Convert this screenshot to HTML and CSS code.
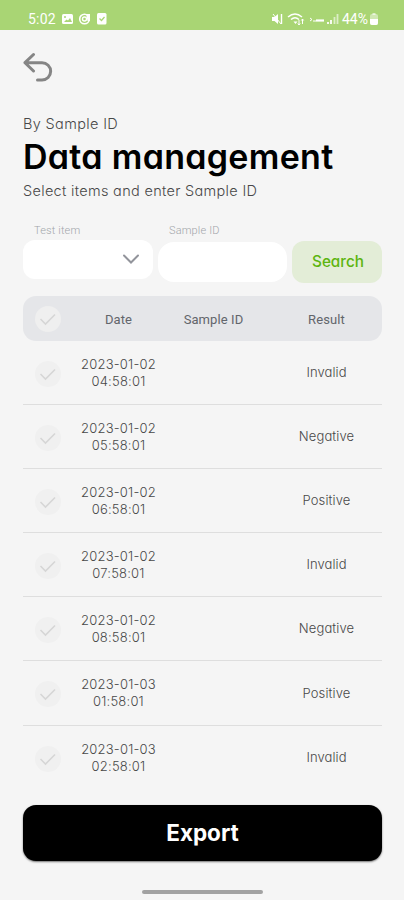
FILE: index.html
```
<!DOCTYPE html>
<html lang="en">
<head>
<meta charset="utf-8">
<title>Data management</title>
<link rel="stylesheet" href="styles.css">
</head>
<body>
<svg class="defs" width="0" height="0"><symbol id="check" viewBox="0 0 26 26"><circle class="disc" cx="13" cy="13" r="13"/><path class="tick" d="M5.500 13l5 5 9.500-9.500"/></symbol></svg>
<header class="status">
  <span class="clock">5:02</span>
  <svg class="notes" width="48" height="14" viewBox="0 0 48 14">
    <rect x="1" y="2" width="11" height="10" rx="1.500" fill="#fff"/><circle cx="4" cy="5" r="1" fill="#a9d574"/><path d="M3 10l2.500-2.500 1.500 1 2-2.500 2 4z" fill="#a9d574"/>
    <circle cx="23.500" cy="7" r="4.800" fill="none" stroke="#fff" stroke-width="1.600"/><circle cx="23.500" cy="7" r="2" fill="none" stroke="#fff" stroke-width="1.400"/><path d="M25 2h4v7h-2.500z" fill="#fff"/>
    <rect x="36" y="1" width="9.500" height="11.500" rx="1.500" fill="#fff"/><path d="M38.500 6.500l2 2 3-3.500" fill="none" stroke="#a9d574" stroke-width="1.300"/>
  </svg>
  <svg class="signals" width="70" height="14" viewBox="0 0 70 14" fill="none" stroke="#fff">
    <path d="M1 5h2.500L7 2v10L3.500 9H1z" fill="#fff" stroke="none"/><path d="M2 2l8 10" stroke-width="1"/><path d="M10.500 2v10" stroke-width="1.400"/>
    <path d="M17 5q7-6 14 0M20 7.500q4-3.500 8 0" stroke-width="1.500"/><path d="M22.500 9.500h4l-2 2.500z" fill="#fff" stroke="none"/><path d="M28 8v5M31.500 7v5M26.800 11.500l1.200 1.500 1.200-1.500M30.300 8.500l1.200-1.500 1.200 1.500" stroke-width="1"/>
    <path d="M39 6l2 1.500-2 1.500M42 9h3" stroke-width="1"/><path d="M45 8.500h8" stroke-width="2.200"/>
    <path d="M57 12v-2M60 12V8" stroke-width="1.800"/><path d="M63.500 12V5M66.500 12V2" stroke-width="1.800" opacity=".6"/>
  </svg>
  <span class="percent">44%</span>
  <svg class="battery" width="8" height="12" viewBox="0 0 8 12"><rect x="2.500" width="3" height="2" fill="#fff" opacity=".6"/><rect x="0" y="1" width="8" height="11" rx="2" fill="#fff" opacity=".45"/><path d="M0 6h8v4a2 2 0 0 1-2 2H2a2 2 0 0 1-2-2z" fill="#fff"/></svg>
</header>
<main class="page">
  <svg class="back" width="30" height="32" viewBox="0 0 30 32"><path d="M10.500 2.500L2 10.700l8.500 8.300M2.500 10.700H19a8.200 8.200 0 0 1 0 17.300h-4.500"/></svg>
  <p class="eyebrow">By Sample ID</p>
  <h1>Data management</h1>
  <p class="hint">Select items and enter Sample ID</p>
  <form class="filters">
    <div class="field item"><label>Test item</label><div class="box"><svg width="18" height="11" viewBox="0 0 18 11"><path d="M2 1.500L9 8.500l7-7"/></svg></div></div>
    <div class="field sample"><label>Sample ID</label><div class="box"></div></div>
    <button type="button" class="search">Search</button>
  </form>
  <div class="row head"><svg class="check"><use href="#check"/></svg><span>Date</span><span>Sample ID</span><span>Result</span></div>
  <div class="list">
    <div class="row"><svg class="check"><use href="#check"/></svg><time>2023-01-02<br>04:58:01</time><span></span><span>Invalid</span></div>
    <div class="row"><svg class="check"><use href="#check"/></svg><time>2023-01-02<br>05:58:01</time><span></span><span>Negative</span></div>
    <div class="row"><svg class="check"><use href="#check"/></svg><time>2023-01-02<br>06:58:01</time><span></span><span>Positive</span></div>
    <div class="row"><svg class="check"><use href="#check"/></svg><time>2023-01-02<br>07:58:01</time><span></span><span>Invalid</span></div>
    <div class="row"><svg class="check"><use href="#check"/></svg><time>2023-01-02<br>08:58:01</time><span></span><span>Negative</span></div>
    <div class="row"><svg class="check"><use href="#check"/></svg><time>2023-01-03<br>01:58:01</time><span></span><span>Positive</span></div>
    <div class="row"><svg class="check"><use href="#check"/></svg><time>2023-01-03<br>02:58:01</time><span></span><span>Invalid</span></div>
  </div>
  <button type="button" class="export">Export</button>
  <div class="home"></div>
</main>
</body>
</html>
```
FILE: styles.css
```
* { box-sizing: border-box; margin: 0; }
body { width: 404px; height: 900px; overflow: hidden; background: #f5f5f5; font-family: Inter, "Liberation Sans", sans-serif; font-feature-settings: "cv11"; color: #484848; }
button { border: 0; font-family: inherit; font-feature-settings: inherit; }
svg { display: block; flex: none; }
.defs { position: absolute; }
.status { height: 30px; padding: 7px 26px 0 28px; display: flex; align-items: center; background: #a9d574; color: #fff; font: 14px/20px Roboto, sans-serif; }
.clock { letter-spacing: .2px; }
.notes { margin-left: 5px; }
.signals { margin-left: auto; }
.percent { margin-left: 1px; }
.battery { margin: 1px 0 0 2px; }
.page { height: 870px; padding: 22px 22px 0 23px; display: flex; flex-direction: column; }
.back { fill: none; stroke: #858585; stroke-width: 3; stroke-linecap: round; stroke-linejoin: round; }
.eyebrow, .hint { font-size: 14.500px; font-weight: 300; line-height: 20px; white-space: nowrap; }
.eyebrow { margin-top: 30px; letter-spacing: .35px; }
h1 { font-size: 34px; font-weight: 600; line-height: 42px; color: #000; white-space: nowrap; margin-top: 2px; letter-spacing: .3px; }
.hint { margin-top: 3px; letter-spacing: .31px; }
.filters { margin-top: 22px; height: 60px; flex: none; display: flex; }
.field label { display: block; height: 17px; padding-left: 11px; color: #a2a5aa; font: 300 11px/16px Roboto, sans-serif; letter-spacing: .15px; }
.item { width: 130px; margin-right: 5px; }
.sample { width: 129px; margin-right: 5px; }
.box { height: 39px; border-radius: 12px; background: #fff; display: flex; justify-content: flex-end; align-items: center; padding-right: 13px; }
.sample .box { height: 40px; margin-top: 2px; border-radius: 16px; }
.box path { fill: none; stroke: #92949b; stroke-width: 2; stroke-linecap: round; }
.search { width: 90px; height: 42px; margin-top: 18px; padding: 0 0 2px 2px; border-radius: 12px; background: #e3edd7; color: #5db510; font-size: 15.300px; font-weight: 500; }
.row { display: grid; grid-template-columns: 50px 91px 99px 127px; align-items: center; text-align: center; font-size: 13px; font-weight: 300; line-height: 17px; height: 64.100px; border-bottom: 1px solid #dedede; }
.row:last-child { border: 0; }
.row time { letter-spacing: .2px; }
.row > :last-child { letter-spacing: .1px; }
.head { height: 45px; flex: none; margin-top: 13px; border: 0; border-radius: 13px; background: #e5e6e9; color: #62656b; font: 13px/18px Roboto, sans-serif; letter-spacing: .1px; }
.head span { padding-top: 2px; }
.list { height: 455px; overflow: hidden; flex: none; }
.check { width: 26px; height: 26px; margin-left: 12px; }
.list .check { margin-top: 2px; color: #f0f0f0; }
.head .check { color: #efefef; }
.disc { fill: currentColor; }
.tick { fill: none; stroke: #d6d6d6; stroke-width: 1.600; }
.export { height: 56px; flex: none; margin-top: 9px; border-radius: 13px; background: #000; color: #fff; font-size: 22.500px; font-weight: 700; padding-bottom: 3px; box-shadow: 0 1px 2px #0008; }
.home { width: 121px; height: 4px; flex: none; margin: 29px auto 0 119px; border-radius: 2px; background: #a2a2a2; }
```
